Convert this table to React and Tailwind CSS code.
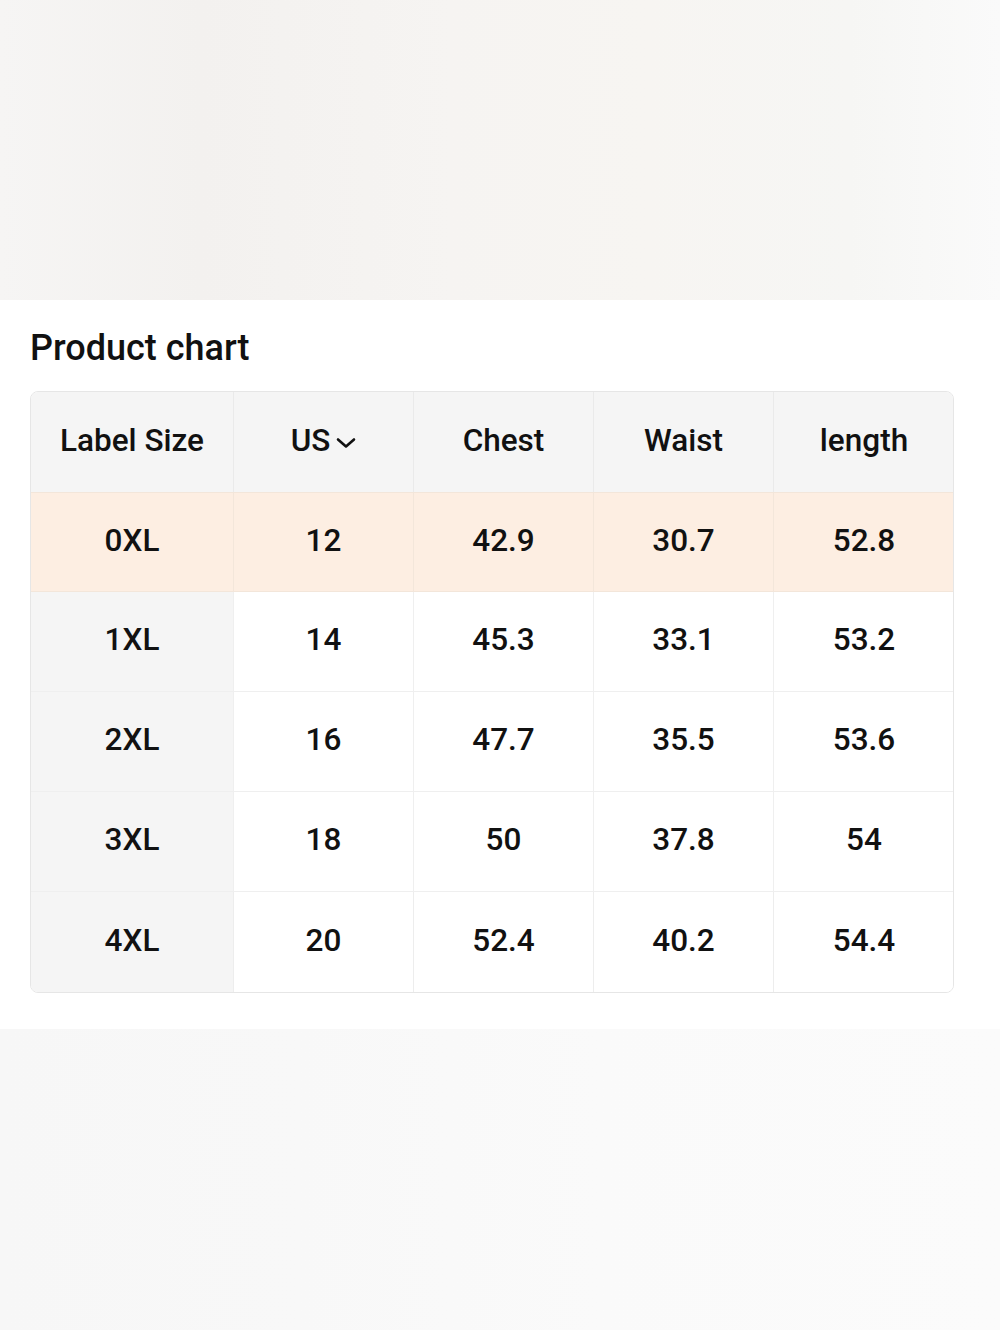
import React from "react";

const rows = [
  ["0XL", "12", "42.9", "30.7", "52.8"],
  ["1XL", "14", "45.3", "33.1", "53.2"],
  ["2XL", "16", "47.7", "35.5", "53.6"],
  ["3XL", "18", "50", "37.8", "54"],
  ["4XL", "20", "52.4", "40.2", "54.4"],
];

function Chevron() {
  return (
    <svg width="20" height="12" viewBox="0 0 20 12" className="ml-[6px] mt-[5px]">
      <path d="M2 2.5 L10 9.5 L18 2.5" fill="none" stroke="#111" strokeWidth="2.6" strokeLinecap="round" strokeLinejoin="round" />
    </svg>
  );
}

export default function App() {
  return (
    <div className="w-[1000px] h-[1330px] bg-white overflow-hidden" style={{ fontFamily: "Roboto, 'Noto Sans', Arial, sans-serif" }}>
      <div className="h-[300px] bg-[linear-gradient(90deg,#f6f5f4_0%,#f3f1ef_20%,#f6f4f2_45%,#f7f5f2_65%,#f6f6f4_85%,#fafafa_100%)]" />
      <div className="px-[30px] pt-[30px] pb-[36px]">
        <div className="text-[36px] leading-none font-medium text-[#111] mb-[25px]">Product chart</div>
        <div className="w-[924px] border border-[#e6e6e6] rounded-[8px] overflow-hidden">
          <div className="grid grid-cols-[203px_180px_180px_180px_180px]">
            {["Label Size", "US", "Chest", "Waist", "length"].map((h, i) => (
              <div
                key={h}
                className={`h-[100px] pb-[3px] flex items-center justify-center bg-[#f5f5f5] text-[31.5px] font-medium text-[#111] ${i < 4 ? "border-r border-[#eaeaea]" : ""}`}
              >
                <span>{h}</span>
                {h === "US" && <Chevron />}
              </div>
            ))}
            {rows.map((r, ri) =>
              r.map((c, ci) => (
                <div
                  key={ri + "-" + ci}
                  className={`h-[100px] pb-[3px] flex items-center justify-center text-[31.5px] font-medium text-[#111] ${
                    ri === 0 ? "bg-[#fdeee2]" : ci === 0 ? "bg-[#f5f5f5]" : "bg-white"
                  } ${ci < 4 ? "border-r border-[#ededed]" : ""} ${ri < 4 ? "border-b border-[#efefef]" : ""} ${ri === 0 ? "border-t border-[#f3e6da]" : ""}`}
                >
                  {c}
                </div>
              ))
            )}
          </div>
        </div>
      </div>
      <div className="h-[303px] bg-[linear-gradient(90deg,#f7f7f7_0%,#f8f8f8_30%,#fafafa_60%,#fbfbfb_100%)]" />
    </div>
  );
}
